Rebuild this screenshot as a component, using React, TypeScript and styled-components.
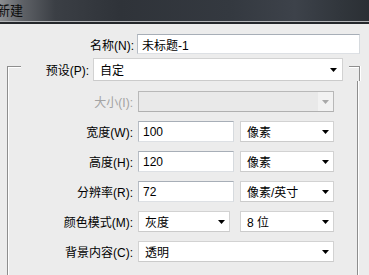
import * as React from 'react';
import styled, { createGlobalStyle } from 'styled-components';

const GlobalStyle = createGlobalStyle`
  html, body {
    margin: 0;
    padding: 0;
    overflow: hidden;
    background: #ececec;
  }
  body {
    font-family: "Liberation Sans", "Noto Sans CJK SC", sans-serif;
    font-size: 12px;
    color: #000;
  }
`;

const Window = styled.div`
  width: 369px;
  height: 275px;
  overflow: hidden;
  background: #ececec;
  display: flex;
  flex-direction: column;
`;

const TitleBar = styled.div`
  flex: none;
  height: 22px;
  display: flex;
  align-items: center;
  background: linear-gradient(90deg, #8b8d90 0px, #5f6267 22px, #3b3f45 55px, #2f3339 120px, #343940 230px, #3d424a 295px, #31363c 340px, #2b2f34 369px);
  border-bottom: 2px solid #24272b;
  box-shadow: inset 0 -1px 0 #b3b5b8;
`;

const Title = styled.span`
  margin-left: -3px;
  font-size: 13px;
  color: #0d0d0d;
  line-height: 1;
  padding-bottom: 1px;
`;

const Body = styled.div`
  padding-top: 10px;
  display: flex;
  flex-direction: column;
`;

const NameRow = styled.div`
  display: flex;
  align-items: center;
  height: 20px;
  gap: 3px;
`;

const Label = styled.label<{ $width: number; $disabled?: boolean }>`
  flex: none;
  width: ${p => p.$width}px;
  text-align: right;
  white-space: nowrap;
  color: ${p => (p.$disabled ? '#a3a3a3' : '#000')};
`;

const TextInput = styled.input<{ $width: number }>`
  box-sizing: border-box;
  flex: none;
  width: ${p => p.$width}px;
  height: 100%;
  margin: 0;
  padding: 0 4px;
  font: inherit;
  color: #000;
  background: #fff;
  border: 1px solid;
  border-color: #a7aeb7 #d6dade #dde0e4 #b6bcc4;
  border-radius: 0;
  outline: none;
`;

const SelectBox = styled.div<{ $width: number; $disabled?: boolean }>`
  box-sizing: border-box;
  flex: none;
  width: ${p => p.$width}px;
  height: 100%;
  display: flex;
  align-items: center;
  padding-left: 6px;
  background: ${p => (p.$disabled ? '#e9e9e9' : '#fff')};
  border: 1px solid ${p => (p.$disabled ? '#b8b8b8' : '#d2d2d2')};
  border-bottom-color: ${p => (p.$disabled ? '#b0b0b0' : '#cbcbcb')};
`;

const SelectText = styled.span`
  flex: 1;
  white-space: nowrap;
`;

const ArrowCell = styled.span<{ $disabled?: boolean; $pad: number }>`
  flex: none;
  align-self: stretch;
  width: ${p => 7 + p.$pad * 2}px;
  display: flex;
  align-items: center;
  justify-content: center;
  background: ${p => (p.$disabled ? '#f2f2f2' : 'transparent')};
`;

const Header = styled.div`
  display: flex;
  height: 23px;
  margin: 4px 0 0 7px;
  width: 351px;
`;

const Stub = styled.div<{ $side: 'left' | 'right'; $width: number }>`
  flex: none;
  width: ${p => p.$width}px;
  margin-top: 8px;
  border-top: 1px solid #8e8e8e;
  ${p => (p.$side === 'left' ? 'border-left: 1px solid #8e8e8e;' : 'border-right: 1px solid #8e8e8e;')}
  box-shadow: ${p => (p.$side === 'left' ? 'inset 1px 1px 0 #fff' : 'inset 0 1px 0 #fff, 1px 0 0 #fff')};
`;

const HeaderMain = styled.div`
  flex: none;
  display: flex;
  align-items: center;
  gap: 4px;
  margin-right: 6px;
`;

const GroupBody = styled.div`
  margin-left: 7px;
  width: 351px;
  box-sizing: border-box;
  flex: 1;
  min-height: 200px;
  padding-top: 10px;
  display: flex;
  flex-direction: column;
  gap: 9px;
  border-left: 1px solid #8e8e8e;
  border-right: 1px solid #8e8e8e;
  box-shadow: inset 1px 0 0 #fff, 1px 0 0 #fff;
`;

const Row = styled.div`
  display: flex;
  align-items: center;
  height: 21px;
  gap: 5px;
`;

const Controls = styled.div<{ $gap: number }>`
  display: flex;
  align-items: center;
  height: 100%;
  gap: ${p => p.$gap}px;
`;

const Arrow = ({ color }: { color: string }) => (
  <svg width="7" height="4" viewBox="0 0 7 4">
    <polygon points="0,0 7,0 3.5,4" fill={color} />
  </svg>
);

interface ISelectProps {
  width: number;
  value?: string;
  disabled?: boolean;
  pad?: number;
}

const Select = ({ width, value, disabled, pad = 4 }: ISelectProps) => (
  <SelectBox $width={width} $disabled={disabled}>
    <SelectText>{value}</SelectText>
    <ArrowCell $disabled={disabled} $pad={pad}>
      <Arrow color={disabled ? '#a9a9a9' : '#000'} />
    </ArrowCell>
  </SelectBox>
);

const LABEL_W = 125;

const sizeRows = [
  { label: '宽度(W):', value: '100', unit: '像素' },
  { label: '高度(H):', value: '120', unit: '像素' },
  { label: '分辨率(R):', value: '72', unit: '像素/英寸' },
];

export default function App() {
  return (
    <>
      <GlobalStyle />
      <Window>
        <TitleBar>
          <Title>新建</Title>
        </TitleBar>
        <Body>
          <NameRow>
            <Label $width={134}>名称(N):</Label>
            <TextInput $width={223} defaultValue="未标题-1" readOnly />
          </NameRow>

          <Header>
            <Stub $side="left" $width={13} />
            <HeaderMain>
              <Label $width={68}>预设(P):</Label>
              <Select width={250} value="自定" pad={5} />
            </HeaderMain>
            <Stub $side="right" $width={10} />
          </Header>

          <GroupBody>
            <Row>
              <Label $width={LABEL_W} $disabled>大小(I):</Label>
              <Select width={196} disabled />
            </Row>
            {sizeRows.map(r => (
              <Row key={r.label}>
                <Label $width={LABEL_W}>{r.label}</Label>
                <Controls $gap={6}>
                  <TextInput $width={96} defaultValue={r.value} readOnly />
                  <Select width={94} value={r.unit} />
                </Controls>
              </Row>
            ))}
            <Row>
              <Label $width={LABEL_W}>颜色模式(M):</Label>
              <Controls $gap={10}>
                <Select width={92} value="灰度" />
                <Select width={94} value="8 位" />
              </Controls>
            </Row>
            <Row>
              <Label $width={LABEL_W}>背景内容(C):</Label>
              <Select width={196} value="透明" />
            </Row>
          </GroupBody>
        </Body>
      </Window>
    </>
  );
}
